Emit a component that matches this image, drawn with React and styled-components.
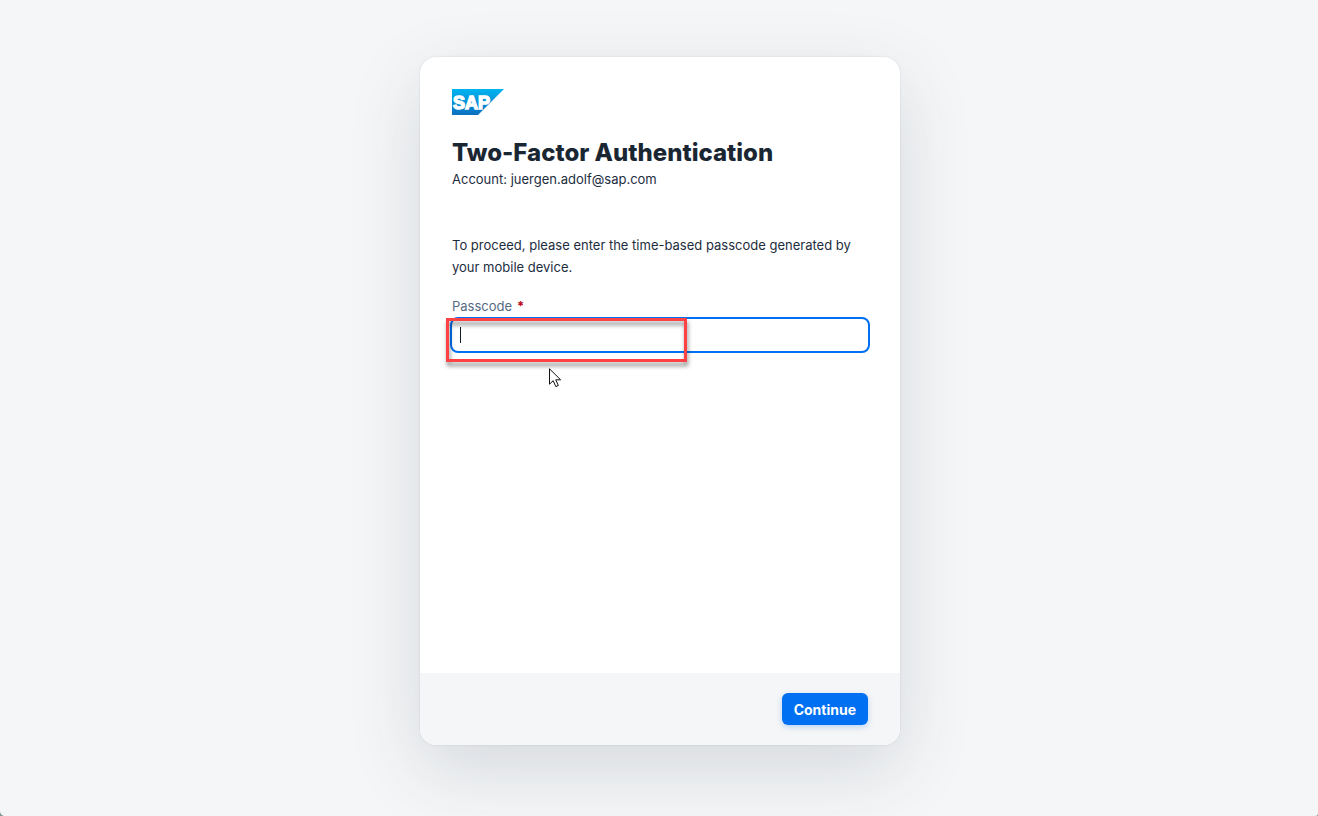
import React from "react";
import styled, { createGlobalStyle } from "styled-components";

const GlobalStyle = createGlobalStyle`
  *, *::before, *::after { box-sizing: border-box; }
  body {
    margin: 0;
    background: #f5f6f7;
    color: #1d2d3e;
    font-family: Inter, "Liberation Sans", sans-serif;
    font-size: 13px;
  }
`;

const Page = styled.main`
  position: relative;
  display: flex;
  justify-content: center;
  align-items: center;
  min-height: 100vh;
  padding: 32px 16px 46px 18px;
`;

const Card = styled.form`
  display: flex;
  flex-direction: column;
  width: 100%;
  max-width: 480px;
  min-height: 688px;
  background: #fff;
  border-radius: 16px;
  overflow: hidden;
  box-shadow: 0 0 2px rgba(34, 53, 72, 0.16), 0 24px 72px rgba(34, 53, 78, 0.15);
`;

const Content = styled.div`
  flex: 1;
  padding: 32px;
`;

const Logo = styled.svg`
  display: block;
  width: 52px;
  height: 26px;
`;

const Title = styled.h1`
  margin: 22px 0 0;
  font-size: 24px;
  line-height: 32px;
  font-weight: 800;
  color: #1a2733;
`;

const Account = styled.p`
  margin: 0;
  line-height: 20px;
`;

const Instructions = styled.p`
  margin: 45px 0 0;
  line-height: 22px;
`;

const Field = styled.div`
  position: relative;
  margin-top: 18px;
`;

const Label = styled.label`
  display: block;
  line-height: 20px;
  padding-bottom: 3px;
  color: #556b82;
`;

const Required = styled.span`
  margin-left: 5px;
  color: #ba0517;
  font-weight: 700;
`;

const Input = styled.input`
  display: block;
  width: 100%;
  height: 32px;
  padding: 0 8px;
  border: 0;
  border-radius: 6px;
  outline: 2px solid #0070f2;
  background: #fff;
  color: inherit;
  font: inherit;
  caret-color: transparent;
`;

const Caret = styled.span`
  position: absolute;
  left: 8px;
  bottom: 8px;
  width: 1px;
  height: 16px;
  background: #131e29;
`;

const Highlight = styled.div`
  position: absolute;
  left: -6px;
  bottom: -11px;
  width: 241px;
  height: 44px;
  border: 3px solid #fd4245;
  filter: drop-shadow(1px 4px 2px rgba(0, 0, 0, 0.45));
  pointer-events: none;
`;

const Pointer = styled.svg`
  position: absolute;
  left: 97px;
  bottom: -37px;
  width: 13px;
  height: 20px;
`;

const Footer = styled.footer`
  display: flex;
  justify-content: flex-end;
  padding: 20px 32px;
  background: #f5f6f7;
`;

const Button = styled.button`
  height: 32px;
  padding: 0 12px;
  border: 0;
  border-radius: 6px;
  background: #0070f2;
  color: #fff;
  font-family: inherit;
  font-size: 14px;
  font-weight: 700;
  box-shadow: 0 2px 6px rgba(0, 112, 242, 0.25);
`;

const Corner = styled.svg`
  position: absolute;
  bottom: 0;
  left: ${(p) => (p.$right ? "auto" : 0)};
  right: ${(p) => (p.$right ? 0 : "auto")};
  width: ${(p) => (p.$right ? 3 : 4)}px;
  height: ${(p) => (p.$right ? 3 : 5)}px;
`;

function SapLogo() {
  return (
    <Logo viewBox="0 0 52 26" role="img" aria-label="SAP">
      <defs>
        <linearGradient id="sap" x1="0" y1="0" x2="0" y2="1">
          <stop offset="0" stopColor="#00b4f0" />
          <stop offset="1" stopColor="#0b70c0" />
        </linearGradient>
      </defs>
      <path d="M0 0H52L26 26H0Z" fill="url(#sap)" />
      <text
        x="1"
        y="20"
        fill="#fff"
        stroke="#fff"
        strokeWidth="1.4"
        fontFamily="Liberation Sans, sans-serif"
        fontWeight="700"
        fontSize="18"
      >
        SAP
      </text>
    </Logo>
  );
}

export default function App() {
  return (
    <>
      <GlobalStyle />
      <Page>
        <Card onSubmit={(e) => e.preventDefault()}>
          <Content>
            <SapLogo />
            <Title>Two-Factor Authentication</Title>
            <Account>Account: juergen.adolf@sap.com</Account>
            <Instructions>
              To proceed, please enter the time-based passcode generated by your
              mobile device.
            </Instructions>
            <Field>
              <Label htmlFor="passcode">
                Passcode<Required>*</Required>
              </Label>
              <Input id="passcode" type="text" autoComplete="one-time-code" required autoFocus />
              <Caret />
              <Highlight />
              <Pointer viewBox="0 0 13 20" aria-hidden="true">
                <path
                  d="M0.5 0.8V16.2L4.2 12.7L6.8 18.6L9.3 17.5L6.8 11.8H11.6Z"
                  fill="#fff"
                  stroke="#111"
                  strokeWidth="1"
                />
              </Pointer>
            </Field>
          </Content>
          <Footer>
            <Button type="submit">Continue</Button>
          </Footer>
        </Card>
        <Corner viewBox="0 0 4 5" aria-hidden="true">
          <path d="M0 0Q0 4 4 5H0Z" fill="#7d9694" />
        </Corner>
        <Corner $right viewBox="0 0 4 4" aria-hidden="true">
          <path d="M4 0Q4 4 0 4H4Z" fill="#999c9e" />
        </Corner>
      </Page>
    </>
  );
}
